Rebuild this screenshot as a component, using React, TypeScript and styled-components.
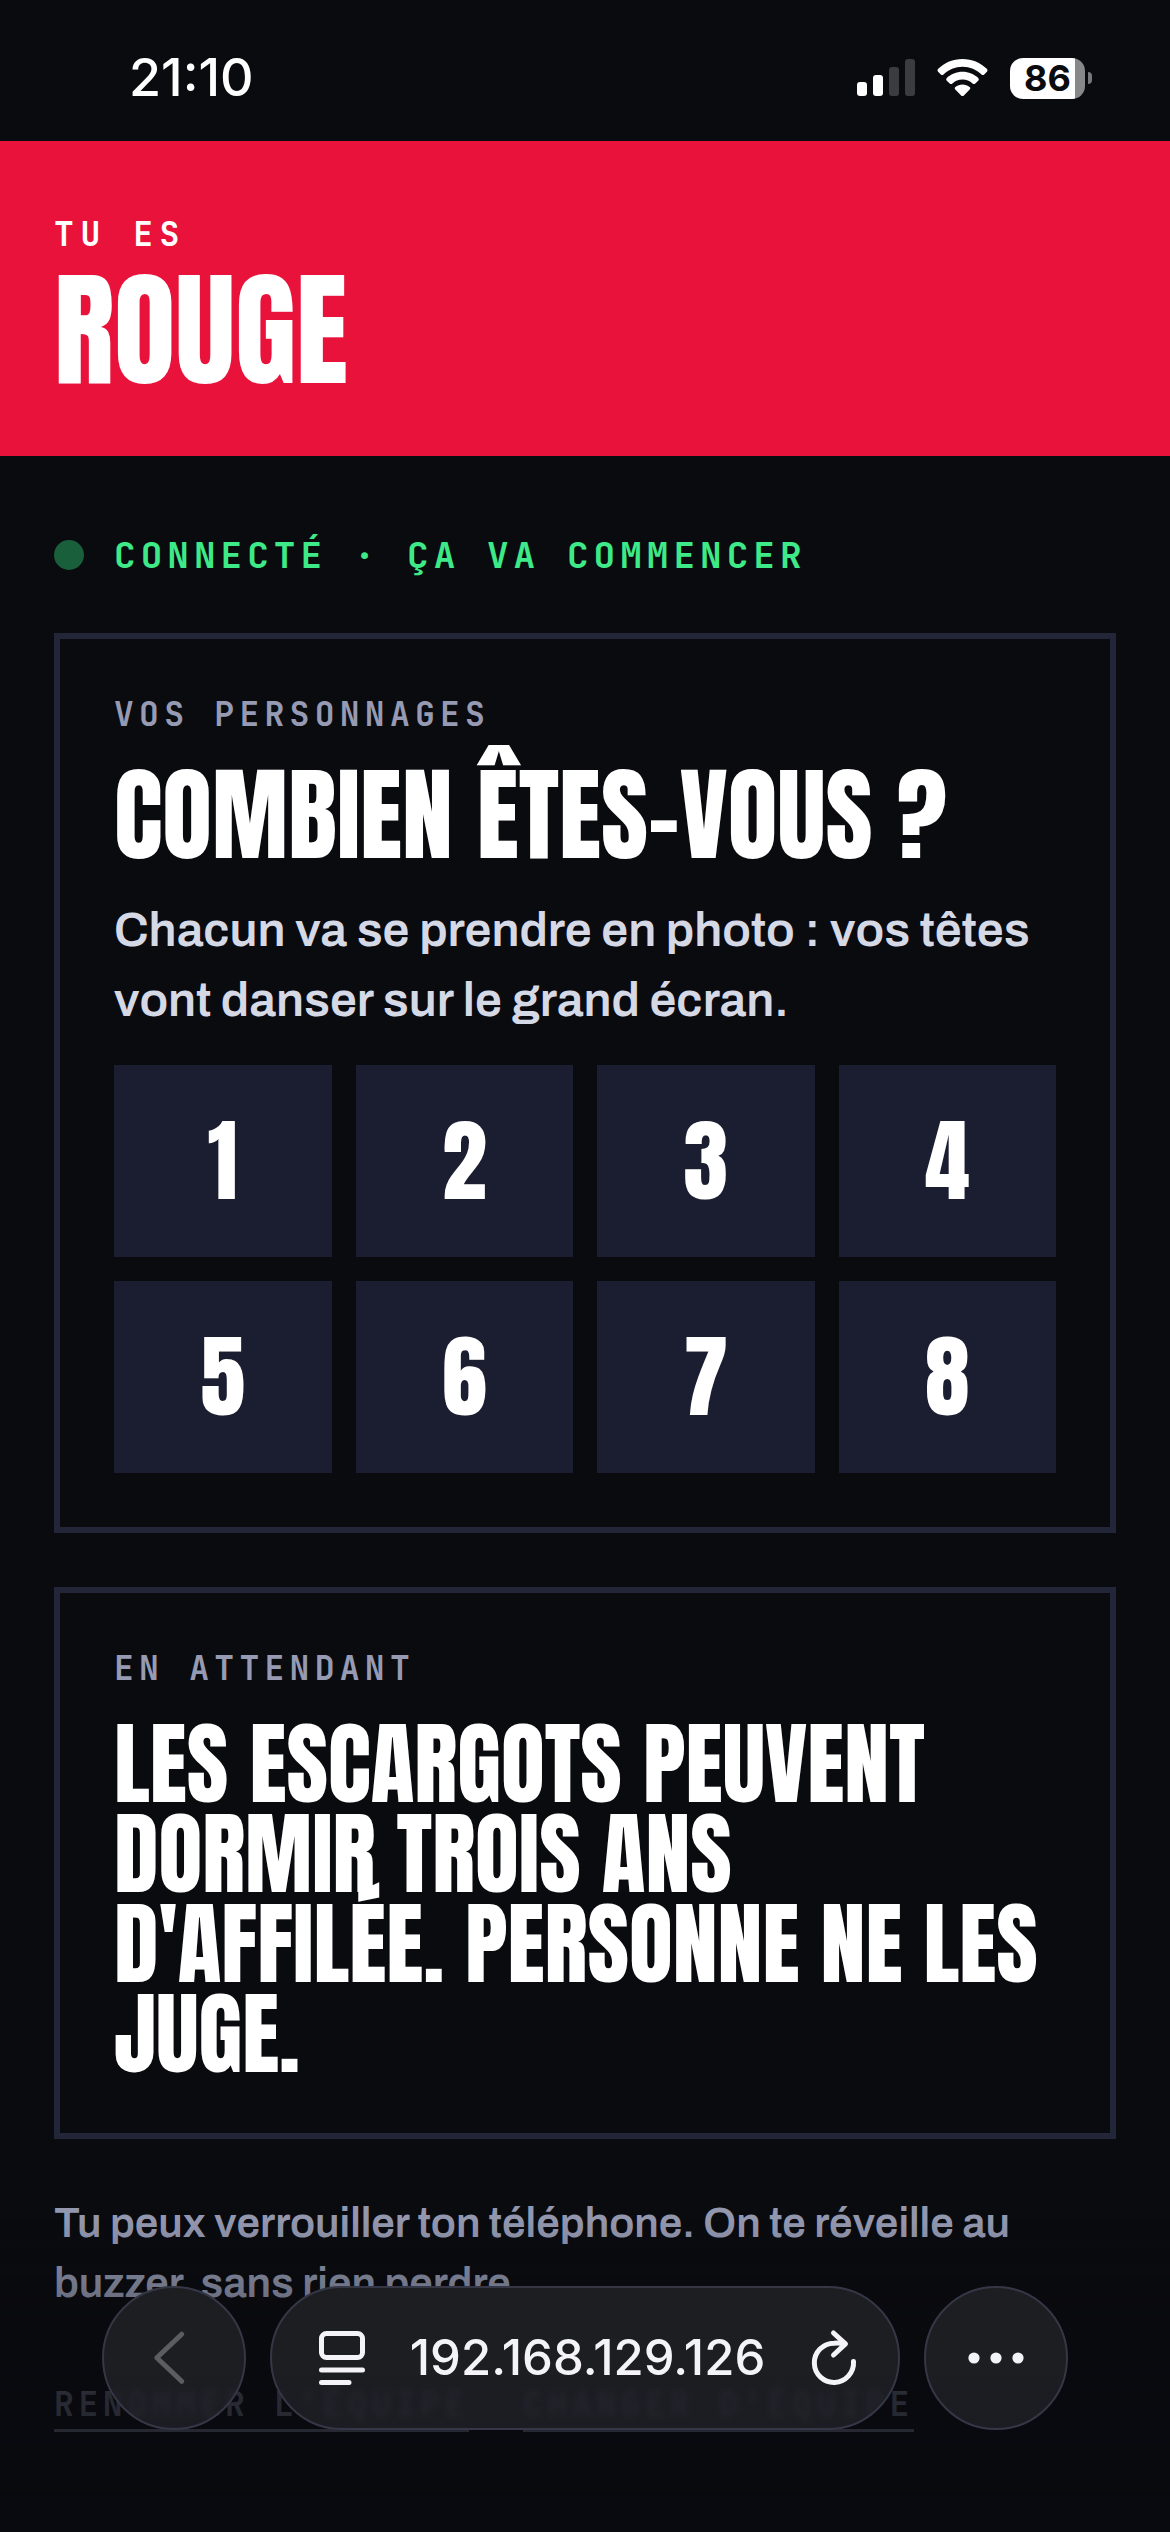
import React from "react";
import styled, { createGlobalStyle } from "styled-components";

const display = `Anton, Impact, "Liberation Sans", sans-serif`;
const body = `Archivo, "Liberation Sans", sans-serif`;
const mono = `"JetBrains Mono", "Liberation Mono", monospace`;
const system = `Inter, "Liberation Sans", sans-serif`;

const Global = createGlobalStyle`
  *, *::before, *::after { box-sizing: border-box; }
  body { margin: 0; background: #0a0b0f; color: #ffffff; font-family: ${body}; }
  h1, h2, p { margin: 0; }
  button { border: 0; padding: 0; margin: 0; background: none; color: inherit; font: inherit; cursor: pointer; }
`;

const Page = styled.div`
  min-height: 100vh;
  background: #0a0b0f;
`;

/* ---------- phone status bar ---------- */

const StatusBar = styled.div`
  display: flex;
  align-items: center;
  justify-content: space-between;
  height: 141px;
  padding: 15px 78px 0 129px;
  font-family: ${system};
`;

const Clock = styled.time`
  font-size: 52px;
  line-height: 60px;
  font-weight: 500;
`;

const StatusIcons = styled.div`
  display: flex;
  align-items: center;
  gap: 22px;
`;

const Battery = styled.div`
  display: flex;
  align-items: center;
  gap: 3px;
`;

const BatteryBody = styled.div`
  width: 75px;
  height: 41px;
  border-radius: 13px;
  background: linear-gradient(to right, #ffffff 65px, #87888a 65px);
  color: #0a0b0f;
  font-size: 36px;
  line-height: 41px;
  font-weight: 700;
  text-align: center;
`;

const BatteryTip = styled.div`
  width: 4px;
  height: 12px;
  border-radius: 0 4px 4px 0;
  background: #77787a;
`;

/* ---------- page ---------- */

const TeamBanner = styled.header`
  display: flex;
  flex-direction: column;
  gap: 12px;
  padding: 72px 54px 63px;
  background: #e8123a;
`;

const Eyebrow = styled.p<{ $tone?: "light" }>`
  font-family: ${mono};
  font-size: 33px;
  line-height: 42px;
  font-weight: 700;
  letter-spacing: ${(p) => (p.$tone === "light" ? "0.2em" : "0.16em")};
  text-transform: uppercase;
  color: ${(p) => (p.$tone === "light" ? "#ffffff" : "#969bb3")};
`;

const TeamName = styled.h1`
  font-family: ${display};
  font-size: 126px;
  line-height: 126px;
  font-weight: 400;
  text-transform: uppercase;
`;

const Main = styled.main`
  display: flex;
  flex-direction: column;
  gap: 54px;
  padding: 75px 54px 99px;
`;

const Connection = styled.p`
  display: flex;
  align-items: center;
  gap: 30px;
  font-family: ${mono};
  font-size: 36px;
  line-height: 48px;
  font-weight: 700;
  letter-spacing: 0.14em;
  text-transform: uppercase;
  color: #3eea87;
`;

const Dot = styled.span`
  flex: none;
  width: 30px;
  height: 30px;
  border-radius: 50%;
  background: #195f3b;
`;

const Card = styled.section`
  display: flex;
  flex-direction: column;
  gap: 30px;
  padding: 54px;
  border: 6px solid #222638;
`;

const Question = styled.h2`
  font-family: ${display};
  font-size: 102px;
  line-height: 100px;
  font-weight: 400;
  text-transform: uppercase;
`;

const Lead = styled.p`
  font-size: 48px;
  line-height: 70px;
  font-weight: 600;
  color: #d5d8e5;
`;

const CountGrid = styled.div`
  display: grid;
  grid-template-columns: repeat(4, 1fr);
  gap: 24px;
`;

const CountButton = styled.button`
  height: 192px;
  background: #1b1d30;
  color: #ffffff;
  font-family: ${display};
  font-size: 90px;
  line-height: 136px;
`;

const Fact = styled.p`
  font-family: ${display};
  font-size: 90px;
  line-height: 90px;
  font-weight: 400;
  text-transform: uppercase;
`;

const Hint = styled.p`
  font-size: 42px;
  line-height: 60px;
  font-weight: 600;
  color: #9297ae;
`;

const Links = styled.div`
  display: flex;
  flex-wrap: wrap;
  gap: 54px;
  padding-top: 15px;
`;

const TextLink = styled.a`
  padding-bottom: 3px;
  border-bottom: 3px solid #969bb3;
  font-family: ${mono};
  font-size: 33px;
  line-height: 44px;
  font-weight: 700;
  letter-spacing: 0.14em;
  text-transform: uppercase;
  text-decoration: none;
  color: #969bb3;
`;

/* ---------- floating browser toolbar ---------- */

const Dock = styled.nav`
  position: fixed;
  left: 0;
  right: 0;
  bottom: 0;
  display: flex;
  gap: 24px;
  padding: 66px 102px 102px;
  background: linear-gradient(to bottom, rgba(9, 10, 15, 0), rgba(9, 10, 15, 0.3) 27%, rgba(9, 10, 15, 0.78) 56%, rgba(9, 10, 15, 0.84));
  font-family: ${system};
  color: #f4f4f8;
`;

const glass = `
  height: 144px;
  border: 2px solid #363746;
  border-radius: 72px;
  background: linear-gradient(to bottom, #1d1e22 60%, rgba(34, 36, 42, 0.74) 74%);
  backdrop-filter: blur(3px);
`;

const RoundButton = styled.button`
  ${glass}
  display: grid;
  place-items: center;
  flex: none;
  width: 144px;
`;

const AddressBar = styled.div`
  ${glass}
  display: flex;
  align-items: center;
  justify-content: space-between;
  flex: 1;
  padding: 0 40px 0 47px;
`;

const AddressButton = styled.button`
  font-size: 49px;
  line-height: 58px;
  font-weight: 500;
`;

const IconButton = styled.button`
  display: grid;
  place-items: center;
`;

const SignalIcon = () => (
  <svg width="58" height="38" viewBox="0 0 58 38" fill="#fff" aria-hidden="true">
    <rect x="0" y="23" width="10" height="14" rx="3" />
    <rect x="16" y="16" width="10" height="21" rx="3" />
    <rect x="32" y="8" width="10" height="29" rx="3" fill="#3b3c40" />
    <rect x="48" y="0" width="10" height="37" rx="3" fill="#3b3c40" />
  </svg>
);

const WifiIcon = () => (
  <svg width="51" height="38" viewBox="0 0 51 38" fill="#fff" aria-hidden="true">
    <path d="M25.5 0C35 0 43.500 3.700 49.800 9.800C50.700 10.700 50.700 11.900 49.900 12.700L47.200 15.400C46.400 16.200 45.300 16.200 44.500 15.400C39.500 10.600 32.800 7.700 25.500 7.700S11.500 10.600 6.500 15.400C5.700 16.200 4.600 16.200 3.800 15.400L1.100 12.700C.300 11.900 .300 10.700 1.200 9.800C7.500 3.700 16 0 25.500 0Z" />
    <path d="M25.5 12.800C31.600 12.800 37.100 15.200 41.200 19C42 19.800 42 20.900 41.200 21.700L38.300 24.500C37.500 25.300 36.500 25.300 35.600 24.500C32.900 22.100 29.400 20.600 25.500 20.600S18.100 22.100 15.400 24.500C14.500 25.300 13.500 25.300 12.700 24.500L9.800 21.700C9 20.900 9 19.800 9.800 19C13.900 15.200 19.400 12.800 25.500 12.800Z" />
    <path d="M25.5 25.500C28.200 25.500 30.700 26.400 32.600 28C33.500 28.700 33.500 29.700 32.700 30.500L26.900 36.400C26.100 37.200 24.900 37.200 24.100 36.400L18.300 30.500C17.500 29.700 17.500 28.700 18.400 28C20.300 26.400 22.800 25.500 25.500 25.500Z" />
  </svg>
);

const BackIcon = () => (
  <svg width="48" height="56" viewBox="0 0 48 56" fill="none" stroke="#5c5d61" strokeWidth="5" strokeLinecap="round" strokeLinejoin="round" aria-hidden="true">
    <path d="M31.700 4.200L6.800 27.700L31.700 51.300" />
  </svg>
);

const PageMenuIcon = () => (
  <svg width="46" height="54" viewBox="0 0 46 54" fill="none" stroke="currentColor" strokeWidth="5" strokeLinecap="round" aria-hidden="true">
    <rect x="2.500" y="2.500" width="41" height="24" rx="5" />
    <path d="M2.500 39H43.500M2.500 51.500H30" />
  </svg>
);

const ReloadIcon = () => (
  <svg width="48" height="60" viewBox="0 0 48 60" fill="none" stroke="currentColor" strokeWidth="5" strokeLinecap="round" strokeLinejoin="round" aria-hidden="true">
    <path d="M43.500 33.500A19.600 19.600 0 1 1 24 15.200Q29 14.800 34.500 15.700" />
    <path d="M23.500 5L35.500 15.800L23.500 27" />
  </svg>
);

const MoreIcon = () => (
  <svg width="56" height="12" viewBox="0 0 56 12" fill="currentColor" aria-hidden="true">
    <circle cx="6" cy="6" r="5.600" />
    <circle cx="28" cy="6" r="5.600" />
    <circle cx="50" cy="6" r="5.600" />
  </svg>
);

const counts = [1, 2, 3, 4, 5, 6, 7, 8];

export default function App() {
  return (
    <Page>
      <Global />
      <StatusBar>
        <Clock>21:10</Clock>
        <StatusIcons>
          <SignalIcon />
          <WifiIcon />
          <Battery>
            <BatteryBody>86</BatteryBody>
            <BatteryTip />
          </Battery>
        </StatusIcons>
      </StatusBar>

      <TeamBanner>
        <Eyebrow $tone="light">Tu es</Eyebrow>
        <TeamName>Rouge</TeamName>
      </TeamBanner>

      <Main>
        <Connection>
          <Dot />
          Connecté · ça va commencer
        </Connection>

        <Card>
          <Eyebrow>Vos personnages</Eyebrow>
          <Question>Combien êtes-vous ?</Question>
          <Lead>Chacun va se prendre en photo : vos têtes vont danser sur le grand écran.</Lead>
          <CountGrid>
            {counts.map((n) => (
              <CountButton key={n} type="button">
                {n}
              </CountButton>
            ))}
          </CountGrid>
        </Card>

        <Card>
          <Eyebrow>En attendant</Eyebrow>
          <Fact>Les escargots peuvent dormir trois ans d'affilée. Personne ne les juge.</Fact>
        </Card>

        <Hint>Tu peux verrouiller ton téléphone. On te réveille au buzzer, sans rien perdre.</Hint>

        <Links>
          <TextLink href="#renommer">Renommer l'équipe</TextLink>
          <TextLink href="#changer">Changer d'équipe</TextLink>
        </Links>
      </Main>

      <Dock aria-label="Navigateur">
        <RoundButton type="button" aria-label="Retour">
          <BackIcon />
        </RoundButton>
        <AddressBar>
          <IconButton type="button" aria-label="Menu de la page">
            <PageMenuIcon />
          </IconButton>
          <AddressButton type="button">192.168.129.126</AddressButton>
          <IconButton type="button" aria-label="Recharger">
            <ReloadIcon />
          </IconButton>
        </AddressBar>
        <RoundButton type="button" aria-label="Plus">
          <MoreIcon />
        </RoundButton>
      </Dock>
    </Page>
  );
}
